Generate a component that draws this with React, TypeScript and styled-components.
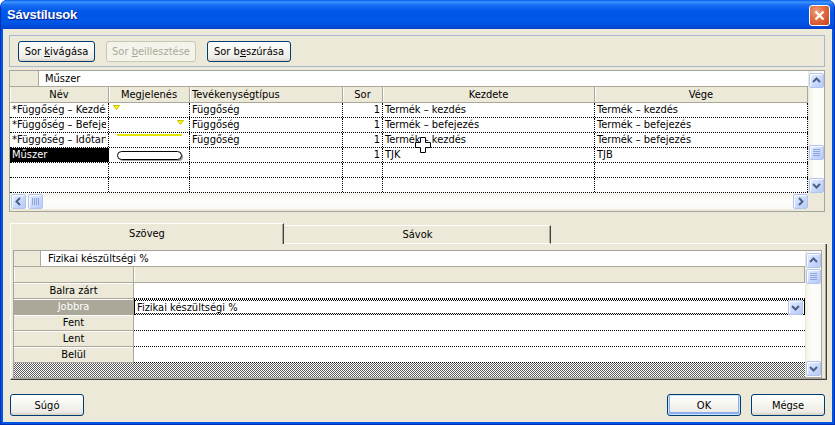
import React from "react";
import styled, { createGlobalStyle } from "styled-components";

const GlobalStyle = createGlobalStyle`
  html, body {
    margin: 0;
    padding: 0;
    background: #fff;
  }
  body {
    font-family: "DejaVu Sans Condensed", "DejaVu Sans", sans-serif;
    font-size: 11px;
    color: #000;
  }
  * {
    box-sizing: border-box;
  }
`;

// window frame
const Window = styled.div`
  width: 835px;
  height: 425px;
  display: flex;
  flex-direction: column;
  background: #0055e5;
  border: 1px solid #0030b8;
  border-top: none;
  border-radius: 7px 7px 0 0;
  overflow: hidden;
`;

const TitleBar = styled.div`
  height: 29px;
  flex-shrink: 0;
  display: flex;
  align-items: center;
  justify-content: space-between;
  padding: 0 4px 0 6px;
  background: linear-gradient(
    180deg,
    #0a5ae8 0px,
    #3d95ff 2px,
    #1a6ef5 5px,
    #0058e8 11px,
    #0056e6 22px,
    #0049d8 27px,
    #003ec8 29px
  );
`;

const TitleText = styled.span`
  font-family: "Liberation Sans", sans-serif;
  font-weight: bold;
  font-size: 13px;
  color: #fff;
  text-shadow: 1px 1px 0 #0a1e8c;
  letter-spacing: -0.2px;
`;

const CloseButton = styled.div`
  width: 21px;
  height: 21px;
  border: 1px solid #fff;
  border-radius: 3px;
  background: radial-gradient(circle at 35% 30%, #f0a080 0%, #e06a40 45%, #c8401a 100%);
  display: flex;
  align-items: center;
  justify-content: center;
  margin-top: 1px;
`;

const Client = styled.div`
  flex: 1;
  margin: 0 2px 2px 2px;
  background: #ece9d8;
  display: flex;
  flex-direction: column;
  padding-top: 6px;
`;

// toolbar
const Toolbar = styled.div`
  height: 32px;
  margin: 0 7px 0 6px;
  border: 1px solid #a5b8cf;
  display: flex;
  gap: 11px;
  padding: 5px 8px 0 8px;
`;

const XpButton = styled.div<{ $w: number; $disabled?: boolean; $default?: boolean; $h?: number }>`
  width: ${(p) => p.$w}px;
  height: ${(p) => p.$h ?? 21}px;
  flex-shrink: 0;
  display: flex;
  align-items: center;
  justify-content: center;
  border: 1px solid ${(p) => (p.$disabled ? "#c9c7ba" : "#003c74")};
  border-radius: 3px;
  color: ${(p) => (p.$disabled ? "#aca899" : "#000")};
  background: ${(p) =>
    p.$disabled
      ? "#f5f4ea"
      : "linear-gradient(180deg, #ffffff 0%, #f7f7f3 40%, #ecebe5 85%, #d6d0c5 100%)"};
  box-shadow: ${(p) =>
    p.$default ? "inset 0 0 0 1px #cee7ff, inset 0 -1px 0 2px #89adf0" : "none"};
  white-space: nowrap;
`;

// grid (top)
const Grid = styled.div`
  margin: 3px 7px 0 6px;
  border: 1px solid #a5a49e;
  background: #ece9d8;
  display: flex;
  flex-direction: column;
`;

const GridTop = styled.div`
  display: flex;
`;

const TableArea = styled.div<{ $w: number }>`
  width: ${(p) => p.$w}px;
  display: flex;
  flex-direction: column;
  background: #fff;
`;

const EntryBar = styled.div`
  height: 16px;
  display: flex;
  border-bottom: 1px solid #aca899;
  background: #fff;
`;

const EntryStub = styled.div<{ $w: number }>`
  width: ${(p) => p.$w}px;
  background: #ece9d8;
  border-right: 1px solid #aca899;
`;

const EntryText = styled.div<{ $pad: number }>`
  padding-left: ${(p) => p.$pad}px;
  line-height: 15px;
  white-space: nowrap;
`;

const HeaderRow = styled.div`
  height: 16px;
  display: flex;
  border-bottom: 1px solid #aca899;
  background: #ece9d8;
`;

const HeaderCell = styled.div<{ $w?: number; $align?: string }>`
  width: ${(p) => (p.$w ? `${p.$w}px` : "auto")};
  flex: ${(p) => (p.$w ? "none" : "1")};
  text-align: ${(p) => p.$align ?? "center"};
  padding: 0 2px;
  line-height: 15px;
  border-right: 1px solid #aca899;
  box-shadow: inset 1px 0 0 #fff;
  white-space: nowrap;
  overflow: hidden;
`;

const DataRow = styled.div`
  height: 15px;
  display: flex;
  border-bottom: 1px dotted #000;
`;

const DataCell = styled.div<{ $w: number; $align?: string; $sel?: boolean }>`
  position: relative;
  width: ${(p) => p.$w}px;
  flex-shrink: 0;
  text-align: ${(p) => p.$align ?? "left"};
  padding: 0 2px;
  line-height: 14px;
  border-right: 1px dotted #000;
  white-space: nowrap;
  overflow: ${(p) => (p.$sel ? "hidden" : "visible")};
  background: ${(p) => (p.$sel ? "#000" : "transparent")};
  color: ${(p) => (p.$sel ? "#fff" : "#000")};
`;

const ClipText = styled.span`
  display: block;
  overflow: hidden;
`;

const Cursor = styled.svg`
  position: absolute;
  left: 32px;
  top: 4px;
  z-index: 2;
`;

const VScroll = styled.div<{ $w: number }>`
  width: ${(p) => p.$w}px;
  display: flex;
  flex-direction: column;
  align-items: center;
  padding-top: 2px;
  background: linear-gradient(90deg, #f3f1e9 0%, #fdfdfa 40%, #fbfaf6 100%);
  border-left: 1px solid #ece9d8;
`;

const Spacer = styled.div<{ $h?: number }>`
  height: ${(p) => (p.$h ? `${p.$h}px` : "auto")};
  flex: ${(p) => (p.$h ? "none" : "1")};
`;

const GridBottom = styled.div`
  display: flex;
  height: 18px;
`;

const HScroll = styled.div<{ $w: number }>`
  width: ${(p) => p.$w}px;
  height: 16px;
  display: flex;
  align-items: center;
  gap: 2px;
  padding: 0 0 0 1px;
  background: linear-gradient(180deg, #f3f1e9 0%, #fdfdfa 40%, #fbfaf6 100%);
`;

const ScrollBtn = styled.div`
  width: 15px;
  height: 15px;
  flex-shrink: 0;
  border: 1px solid #b0c4ef;
  border-radius: 2px;
  background: linear-gradient(135deg, #e8effe 0%, #c9d8fc 55%, #b6cbf8 100%);
  box-shadow: inset 1px 1px 0 rgba(255, 255, 255, 0.85);
  display: flex;
  align-items: center;
  justify-content: center;
`;

// tabs
const TabStrip = styled.div`
  display: flex;
  align-items: flex-end;
  height: 21px;
  margin: 11px 0 0 7px;
`;

const Tab = styled.div<{ $w: number; $active?: boolean }>`
  width: ${(p) => p.$w}px;
  height: ${(p) => (p.$active ? 21 : 19)}px;
  display: flex;
  align-items: center;
  justify-content: center;
  padding-bottom: ${(p) => (p.$active ? 2 : 0)}px;
  border-top: 1px solid #fff;
  border-left: 1px solid ${(p) => (p.$active ? "#fff" : "transparent")};
  border-right: 1px solid #404040;
  border-bottom: ${(p) => (p.$active ? "none" : "1px solid #fff")};
  box-shadow: inset -1px 0 0 #aca899;
  background: #ece9d8;
`;

const TabFill = styled.div`
  flex: 1;
  height: 1px;
  background: #fff;
  margin-right: 5px;
`;

const Panel = styled.div`
  width: 817px;
  height: 136px;
  margin-left: 7px;
  border-left: 1px solid #fff;
  border-right: 1px solid #404040;
  border-bottom: 1px solid #404040;
  box-shadow: inset -1px -1px 0 #aca899;
  padding: 6px 4px 0 2px;
`;

const Grid2 = styled.div`
  width: 809px;
  height: 128px;
  border: 1px solid #a5a49e;
  display: flex;
  background: #fff;
`;

const RowHead = styled.div<{ $sel?: boolean }>`
  width: 120px;
  flex-shrink: 0;
  text-align: center;
  line-height: 15px;
  background: ${(p) => (p.$sel ? "#aca899" : "#ece9d8")};
  color: ${(p) => (p.$sel ? "#fff" : "#000")};
  border-right: 1px solid #aca899;
  border-bottom: 1px solid #aca899;
  box-shadow: inset 0 1px 0 #fff;
`;

const PropRow = styled.div`
  height: 16px;
  display: flex;
`;

const PropCell = styled.div<{ $focus?: boolean }>`
  flex: 1;
  display: flex;
  align-items: center;
  justify-content: space-between;
  padding-left: 2px;
  border-bottom: ${(p) => (p.$focus ? "none" : "1px dotted #000")};
  ${(p) =>
    p.$focus
      ? `
    border-left: 1px solid #000;
    border-right: 1px solid #000;
    background:
      repeating-conic-gradient(#000 0 25%, #fff 0 50%) left top / 2px 2px repeat-x,
      repeating-conic-gradient(#000 0 25%, #fff 0 50%) left bottom / 2px 2px repeat-x,
      #fff;
    padding-top: 1px;
  `
      : ""}
`;

const ComboBtn = styled(ScrollBtn)`
  margin-right: 1px;
`;

const Checker = styled.div`
  height: 14px;
  background: repeating-conic-gradient(#5a5a5a 0 25%, #fff 0 50%) 0 0 / 2px 2px;
`;

const Footer = styled.div`
  display: flex;
  align-items: center;
  gap: 10px;
  margin-top: 14px;
  padding: 0 7px;
`;

const Grow = styled.div`
  flex: 1;
`;

const Arrow: React.FC<{ dir: "up" | "down" | "left" | "right" }> = ({ dir }) => {
  const pts = {
    up: "1,6 4.5,2.5 8,6",
    down: "1,3 4.5,6.5 8,3",
    left: "6,1 2.5,4.5 6,8",
    right: "3,1 6.5,4.5 3,8",
  }[dir];
  return (
    <svg width="9" height="9" viewBox="0 0 9 9">
      <polyline points={pts} fill="none" stroke="#4d6185" strokeWidth="2" />
    </svg>
  );
};

const Grip: React.FC<{ vertical?: boolean }> = ({ vertical }) => (
  <svg width="7" height="7" viewBox="0 0 7 7">
    {[0, 2, 4, 6].map((o) =>
      vertical ? (
        <line key={o} x1="0" y1={o + 0.5} x2="7" y2={o + 0.5} stroke="#8fa5dc" />
      ) : (
        <line key={o} x1={o + 0.5} y1="0" x2={o + 0.5} y2="7" stroke="#8fa5dc" />
      )
    )}
  </svg>
);

type Look = "tri1" | "tri2" | "line" | "bar" | null;

const Appearance: React.FC<{ look: Look }> = ({ look }) => (
  <svg width="78" height="14" viewBox="0 0 78 14" style={{ display: "block", marginLeft: -2 }}>
    {look === "tri1" && <polygon points="4.5,2.5 10.5,2.5 7.5,6.5" fill="#ffff00" stroke="#c8c000" />}
    {look === "tri2" && <polygon points="68.5,2.5 74.5,2.5 71.5,6.5" fill="#ffff00" stroke="#c8c000" />}
    {look === "line" && <rect x="8" y="1" width="65" height="2" fill="#e4e400" />}
    {look === "bar" && (
      <>
        <rect x="10" y="5" width="64" height="8" rx="4" fill="#a0a0a0" />
        <rect x="8.5" y="3.5" width="64" height="8" rx="4" fill="#fff" stroke="#000" />
      </>
    )}
  </svg>
);

const cols = [99, 81, 153, 40, 212, 213];

type Row = { name: string; look: Look; type: string; sor: string; start: string; end: string; sel?: boolean; cursor?: boolean };

const rows: Row[] = [
  { name: "*Függőség – Kezdés–kezdés", look: "tri1", type: "Függőség", sor: "1", start: "Termék – kezdés", end: "Termék – kezdés" },
  { name: "*Függőség – Befejezés–befejezés", look: "tri2", type: "Függőség", sor: "1", start: "Termék – befejezés", end: "Termék – befejezés" },
  { name: "*Függőség – Időtartam", look: "line", type: "Függőség", sor: "1", start: "Termék – kezdés", end: "Termék – befejezés", cursor: true },
  { name: "Műszer", look: "bar", type: "", sor: "1", start: "TJK", end: "TJB", sel: true },
  { name: "", look: null, type: "", sor: "", start: "", end: "" },
  { name: "", look: null, type: "", sor: "", start: "", end: "" },
];

const props = [
  { label: "Balra zárt", value: "" },
  { label: "Jobbra", value: "Fizikai készültségi %", sel: true },
  { label: "Fent", value: "" },
  { label: "Lent", value: "" },
  { label: "Belül", value: "" },
];

const App: React.FC = () => {
  return (
    <>
      <GlobalStyle />
      <Window>
        <TitleBar>
          <TitleText>Sávstílusok</TitleText>
          <CloseButton>
            <svg width="11" height="11" viewBox="0 0 11 11">
              <path d="M1.5 1.5 L9.5 9.5 M9.5 1.5 L1.5 9.5" stroke="#fff" strokeWidth="2.2" />
            </svg>
          </CloseButton>
        </TitleBar>
        <Client>
          <Toolbar>
            <XpButton $w={77}>
              Sor&nbsp;<u>k</u>ivágása
            </XpButton>
            <XpButton $w={90} $disabled>
              Sor&nbsp;<u>b</u>eillesztése
            </XpButton>
            <XpButton $w={84}>
              Sor&nbsp;b<u>e</u>szúrása
            </XpButton>
          </Toolbar>

          <Grid>
            <GridTop>
              <TableArea $w={798}>
                <EntryBar>
                  <EntryStub $w={29} />
                  <EntryText $pad={6}>Műszer</EntryText>
                </EntryBar>
                <HeaderRow>
                  <HeaderCell $w={cols[0]}>Név</HeaderCell>
                  <HeaderCell $w={cols[1]}>Megjelenés</HeaderCell>
                  <HeaderCell $w={cols[2]} $align="left">
                    Tevékenységtípus
                  </HeaderCell>
                  <HeaderCell $w={cols[3]}>Sor</HeaderCell>
                  <HeaderCell $w={cols[4]}>Kezdete</HeaderCell>
                  <HeaderCell $w={cols[5]}>Vége</HeaderCell>
                </HeaderRow>
                {rows.map((r, i) => (
                  <DataRow key={i}>
                    <DataCell $w={cols[0]} $sel={r.sel}>
                      <ClipText>{r.name}</ClipText>
                    </DataCell>
                    <DataCell $w={cols[1]}>
                      <Appearance look={r.look} />
                    </DataCell>
                    <DataCell $w={cols[2]}>{r.type}</DataCell>
                    <DataCell $w={cols[3]} $align="right">
                      {r.sor}
                    </DataCell>
                    <DataCell $w={cols[4]}>
                      {r.start}
                      {r.cursor && (
                        <Cursor width="16" height="16" viewBox="0 0 16 16">
                          <polygon
                            points="5.5,0.5 10.5,0.5 10.5,5.5 15.5,5.5 15.5,10.5 10.5,10.5 10.5,15.5 5.5,15.5 5.5,10.5 0.5,10.5 0.5,5.5 5.5,5.5"
                            fill="#fff"
                            stroke="#000"
                          />
                        </Cursor>
                      )}
                    </DataCell>
                    <DataCell $w={cols[5]}>{r.end}</DataCell>
                  </DataRow>
                ))}
              </TableArea>
              <VScroll $w={17}>
                <ScrollBtn>
                  <Arrow dir="up" />
                </ScrollBtn>
                <Spacer $h={57} />
                <ScrollBtn>
                  <Grip vertical />
                </ScrollBtn>
                <Spacer />
                <ScrollBtn>
                  <Arrow dir="down" />
                </ScrollBtn>
              </VScroll>
            </GridTop>
            <GridBottom>
              <HScroll $w={798}>
                <ScrollBtn>
                  <Arrow dir="left" />
                </ScrollBtn>
                <ScrollBtn>
                  <Grip />
                </ScrollBtn>
                <Grow />
                <ScrollBtn>
                  <Arrow dir="right" />
                </ScrollBtn>
              </HScroll>
            </GridBottom>
          </Grid>

          <TabStrip>
            <Tab $w={274} $active>
              Szöveg
            </Tab>
            <Tab $w={267}>Sávok</Tab>
            <TabFill />
          </TabStrip>
          <Panel>
            <Grid2>
              <TableArea $w={791}>
                <EntryBar>
                  <EntryStub $w={27} />
                  <EntryText $pad={7}>Fizikai készültségi %</EntryText>
                </EntryBar>
                <HeaderRow>
                  <HeaderCell $w={120} />
                  <HeaderCell />
                </HeaderRow>
                {props.map((p) => (
                  <PropRow key={p.label}>
                    <RowHead $sel={p.sel}>{p.label}</RowHead>
                    <PropCell $focus={p.sel}>
                      <span>{p.value}</span>
                      {p.sel && (
                        <ComboBtn>
                          <Arrow dir="down" />
                        </ComboBtn>
                      )}
                    </PropCell>
                  </PropRow>
                ))}
                <Checker />
              </TableArea>
              <VScroll $w={16}>
                <ScrollBtn>
                  <Arrow dir="up" />
                </ScrollBtn>
                <Spacer $h={1} />
                <ScrollBtn>
                  <Grip vertical />
                </ScrollBtn>
                <Spacer />
                <ScrollBtn>
                  <Arrow dir="down" />
                </ScrollBtn>
                <Spacer $h={1} />
              </VScroll>
            </Grid2>
          </Panel>

          <Footer>
            <XpButton $w={74} $h={22}>
              Sú<u>g</u>ó
            </XpButton>
            <Grow />
            <XpButton $w={74} $h={22} $default>
              OK
            </XpButton>
            <XpButton $w={74} $h={22}>
              Mégse
            </XpButton>
          </Footer>
        </Client>
      </Window>
    </>
  );
};

export default App;
